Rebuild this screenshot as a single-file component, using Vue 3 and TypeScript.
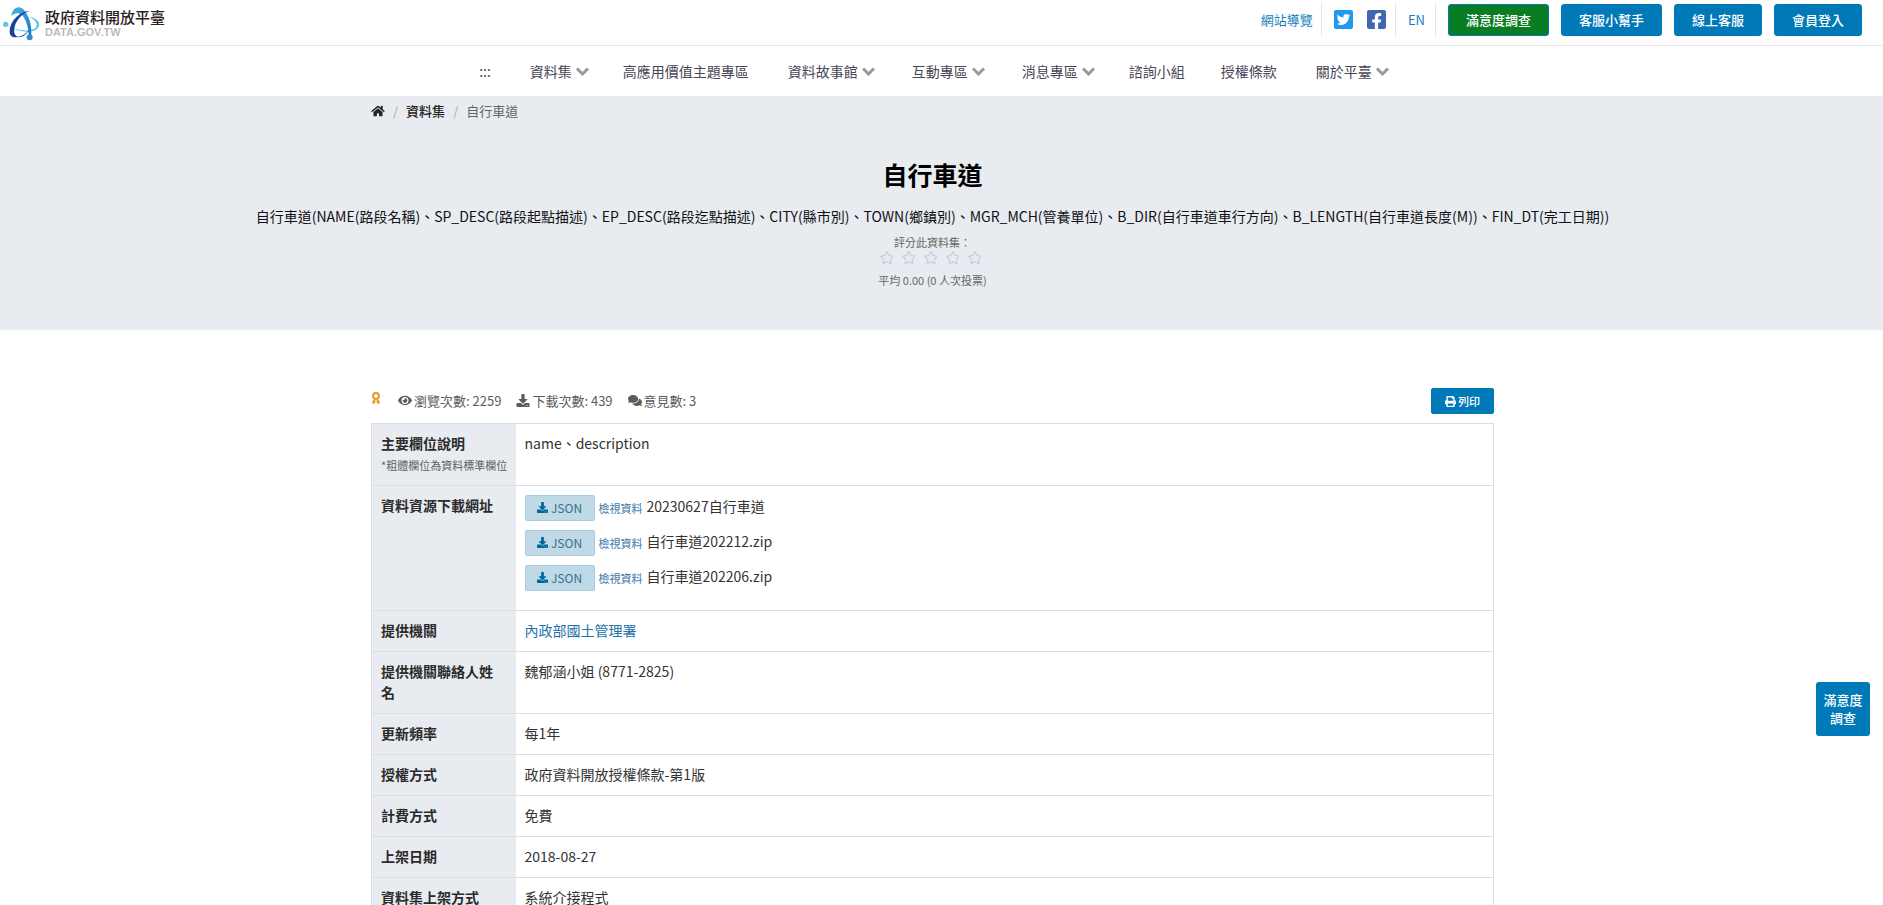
<script setup lang="ts">
interface NavItem { label: string; menu: boolean }
interface Resource { name: string }
interface Row { label: string; value: string }

const nav: NavItem[] = [
  { label: '資料集', menu: true },
  { label: '高應用價值主題專區', menu: false },
  { label: '資料故事館', menu: true },
  { label: '互動專區', menu: true },
  { label: '消息專區', menu: true },
  { label: '諮詢小組', menu: false },
  { label: '授權條款', menu: false },
  { label: '關於平臺', menu: true },
]

const actions: string[] = ['客服小幫手', '線上客服', '會員登入']

const resources: Resource[] = [
  { name: '20230627自行車道' },
  { name: '自行車道202212.zip' },
  { name: '自行車道202206.zip' },
]

const rows: Row[] = [
  { label: '提供機關聯絡人姓名', value: '魏郁涵小姐 (8771-2825)' },
  { label: '更新頻率', value: '每1年' },
  { label: '授權方式', value: '政府資料開放授權條款-第1版' },
  { label: '計費方式', value: '免費' },
  { label: '上架日期', value: '2018-08-27' },
  { label: '資料集上架方式', value: '系統介接程式' },
]

const icons = {
  download: 'M216 0h80c13.3 0 24 10.7 24 24v168h87.7c17.8 0 26.7 21.5 14.1 34.1L269.7 378.3c-7.5 7.5-19.8 7.5-27.3 0L90.1 226.1c-12.6-12.6-3.7-34.1 14.1-34.1H192V24c0-13.3 10.7-24 24-24zm296 376v112c0 13.3-10.7 24-24 24H24c-13.3 0-24-10.7-24-24V376c0-13.3 10.7-24 24-24h146.7l49 49c20.1 20.1 52.5 20.1 72.6 0l49-49H488c13.3 0 24 10.7 24 24zm-124 88c0-11-9-20-20-20s-20 9-20 20 9 20 20 20 20-9 20-20zm64 0c0-11-9-20-20-20s-20 9-20 20 9 20 20 20 20-9 20-20z',
  eye: 'M572.52 241.4C518.29 135.59 410.93 64 288 64S57.68 135.64 3.48 241.41a32.35 32.35 0 0 0 0 29.19C57.71 376.41 165.07 448 288 448s230.32-71.64 284.52-177.41a32.35 32.35 0 0 0 0-29.19zM288 400a144 144 0 1 1 144-144 143.93 143.93 0 0 1-144 144zm0-240a95.31 95.31 0 0 0-25.31 3.79 47.85 47.85 0 0 1-66.9 66.9A95.78 95.78 0 1 0 288 160z',
  comments: 'M416 192c0-88.4-93.1-160-208-160S0 103.6 0 192c0 34.3 14.1 65.9 38 92-13.4 30.2-35.5 54.2-35.8 54.5-2.2 2.3-2.8 5.7-1.5 8.7S4.8 352 8 352c36.6 0 66.9-12.3 88.7-25 32.2 15.7 70.3 25 111.3 25 114.9 0 208-71.6 208-160zm122 220c23.9-26 38-57.7 38-92 0-66.9-53.5-124.2-129.3-148.1.9 6.6 1.3 13.3 1.3 20.1 0 105.9-107.7 192-240 192-10.8 0-21.3-.8-31.7-1.9C207.8 439.6 281.8 480 368 480c41 0 79.1-9.2 111.3-25 21.8 12.7 52.1 25 88.7 25 3.2 0 6.1-1.9 7.3-4.8 1.3-2.9.7-6.3-1.5-8.7-.3-.3-22.4-24.2-35.8-54.5z',
  home: 'M280.37 148.26L96 300.11V464a16 16 0 0 0 16 16l112.06-.29a16 16 0 0 0 15.92-16V368a16 16 0 0 1 16-16h64a16 16 0 0 1 16 16v95.64a16 16 0 0 0 16 16.05L464 480a16 16 0 0 0 16-16V300L295.67 148.26a12.19 12.19 0 0 0-15.3 0zM571.6 251.47L488 182.56V44.05a12 12 0 0 0-12-12h-56a12 12 0 0 0-12 12v72.61L318.47 43a48 48 0 0 0-61 0L4.34 251.47a12 12 0 0 0-1.6 16.9l25.5 31A12 12 0 0 0 45.15 301l235.22-193.74a12.19 12.19 0 0 1 15.3 0L530.9 301a12 12 0 0 0 16.9-1.6l25.5-31a12 12 0 0 0-1.7-16.93z',
  print: 'M448 192V77.25c0-8.49-3.37-16.62-9.37-22.63L393.37 9.37c-6-6-14.14-9.37-22.63-9.37H96C78.33 0 64 14.33 64 32v160c-35.35 0-64 28.65-64 64v112c0 8.84 7.16 16 16 16h48v96c0 17.67 14.33 32 32 32h320c17.67 0 32-14.33 32-32v-96h48c8.84 0 16-7.16 16-16V256c0-35.35-28.65-64-64-64zm-64 256H128v-96h256v96zm0-224H128V64h192v48c0 8.84 7.16 16 16 16h48v96zm48 72c-13.25 0-24-10.75-24-24 0-13.26 10.75-24 24-24s24 10.74 24 24c0 13.25-10.75 24-24 24z',
  twitter: 'M400 32H48C21.5 32 0 53.5 0 80v352c0 26.5 21.5 48 48 48h352c26.5 0 48-21.5 48-48V80c0-26.5-21.5-48-48-48zm-48.9 158.8c.2 2.8.2 5.7.2 8.5 0 86.7-66 186.6-186.6 186.6-37.2 0-71.7-10.8-100.7-29.4 5.3.6 10.4.8 15.8.8 30.7 0 58.9-10.4 81.4-28-28.8-.6-53-19.5-61.3-45.5 10.1 1.5 19.2 1.5 29.6-1.2-30-6.1-52.5-32.5-52.5-64.4v-.8c8.7 4.9 18.9 7.9 29.6 8.3a65.447 65.447 0 0 1-29.2-54.6c0-12.2 3.2-23.4 8.9-33.1 32.3 39.8 80.8 65.8 135.2 68.6-9.3-44.5 24-80.6 64-80.6 18.9 0 35.9 7.9 47.9 20.7 14.8-2.8 29-8.3 41.6-15.8-4.9 15.2-15.2 28-28.8 36.1 13.2-1.4 26-5.1 37.8-10.2-8.9 13.1-20.1 24.7-32.9 34z',
  facebook: 'M400 32H48A48 48 0 0 0 0 80v352a48 48 0 0 0 48 48h137.25V327.69h-63V256h63v-54.64c0-62.15 37-96.48 93.67-96.48 27.14 0 55.52 4.84 55.52 4.84v61h-31.27c-30.81 0-40.42 19.12-40.42 38.73V256h68.78l-11 71.69h-57.78V480H400a48 48 0 0 0 48-48V80a48 48 0 0 0-48-48z',
  star: 'M528.1 171.5L382 150.2 316.7 17.8c-11.7-23.6-45.6-23.9-57.4 0L194 150.2 47.9 171.5c-26.2 3.8-36.7 36.1-17.7 54.6l105.7 103-25 145.5c-4.5 26.3 23.2 46 46.4 33.7L288 439.6l130.7 68.7c23.2 12.2 50.9-7.4 46.4-33.7l-25-145.5 105.7-103c19-18.5 8.5-50.8-17.7-54.6zM388.6 312.3l23.7 138.4L288 385.4l-124.3 65.3 23.7-138.4-100.6-98 139-20.2 62.2-126 62.2 126 139 20.2-100.6 98z',
}
</script>

<template>
  <div class="page">
    <header class="topbar">
      <a class="brand" href="#">
        <svg class="brand-mark" viewBox="6 20 114 108" aria-hidden="true">
          <defs>
            <linearGradient id="arc" x1="0" y1="0" x2="1" y2="1">
              <stop offset="0" stop-color="#49b3e4" />
              <stop offset="1" stop-color="#2277c4" />
            </linearGradient>
          </defs>
          <path class="cyan" d="M18 78C45 93 92 100 107 85C116 74 104 60 88 52C104 54 121 66 117 80C108 106 55 100 18 78z" />
          <path class="sky" d="M34 50C37 31 47 23 58 24C75 26 97 62 94 108L86 108C86 84 75 53 63 45C52 38 42 42 34 50z" fill="url(#arc)" />
          <path class="navy" d="M89 34C62 44 45 67 43 89C41 102 45 109 54 112C38 117 28 110 29 94C31 63 59 36 89 34z" />
          <path class="navy" d="M53 112C67 111 79 102 89 88C81 105 68 114 53 114z" />
          <circle class="cyan" cx="17" cy="75" r="8" />
          <circle cx="89" cy="114" r="9" fill="#2f8dcf" />
        </svg>
        <span class="brand-text">
          <span class="brand-name">政府資料開放平臺</span>
          <span class="brand-domain">DATA.GOV.TW</span>
        </span>
      </a>
      <div class="tools">
        <a class="tool sitemap" href="#">網站導覽</a>
        <span class="tool social">
          <a href="#" aria-label="Twitter"><svg class="social-icon twitter" viewBox="0 32 448 448"><path :d="icons.twitter" /></svg></a>
          <a href="#" aria-label="Facebook"><svg class="social-icon facebook" viewBox="0 32 448 448"><path :d="icons.facebook" /></svg></a>
        </span>
        <a class="tool language" href="#">EN</a>
        <div class="actions">
          <button class="action survey" type="button">滿意度調查</button>
          <button v-for="a in actions" :key="a" class="action" type="button">{{ a }}</button>
        </div>
      </div>
    </header>

    <nav class="nav">
      <a class="nav-link" href="#">:::</a>
      <a v-for="n in nav" :key="n.label" class="nav-link" :class="{ menu: n.menu }" href="#">
        {{ n.label }}
        <svg v-if="n.menu" class="chevron" viewBox="0 0 13 9" aria-hidden="true"><path d="M1 1.5L6.500 7L12 1.5" /></svg>
      </a>
    </nav>

    <section class="hero">
      <ol class="crumbs">
        <li><a href="#" aria-label="首頁"><svg class="home" viewBox="0 0 576 512"><path :d="icons.home" /></svg></a></li>
        <li><a class="strong" href="#">資料集</a></li>
        <li>自行車道</li>
      </ol>
      <h1>自行車道</h1>
      <p class="summary">自行車道(NAME(路段名稱)、SP_DESC(路段起點描述)、EP_DESC(路段迄點描述)、CITY(縣市別)、TOWN(鄉鎮別)、MGR_MCH(管養單位)、B_DIR(自行車道車行方向)、B_LENGTH(自行車道長度(M))、FIN_DT(完工日期))</p>
      <p class="rate-label">評分此資料集：</p>
      <div class="stars">
        <button v-for="s in 5" :key="s" type="button" class="star" :aria-label="`${s} 分`">
          <svg viewBox="20 0 536 512"><path :d="icons.star" /></svg>
        </button>
      </div>
      <p class="rate-label">平均 0.00 (0 人次投票)</p>
    </section>

    <main class="main">
      <div class="meta">
        <svg class="award" viewBox="0 0 10 13" aria-hidden="true">
          <circle cx="5" cy="4" r="2.900" />
          <path d="M2.400 7.400L4.700 8.600L3.600 12.600L2.600 11.200L0.700 11.200zM7.600 7.400L5.300 8.600L6.400 12.600L7.400 11.200L9.300 11.200z" />
        </svg>
        <span class="stat"><svg viewBox="0 0 576 512"><path :d="icons.eye" /></svg>瀏覽次數: 2259</span>
        <span class="stat"><svg viewBox="0 0 512 512"><path :d="icons.download" /></svg>下載次數: 439</span>
        <span class="stat"><svg viewBox="0 0 576 512"><path :d="icons.comments" /></svg>意見數: 3</span>
        <button class="print" type="button"><svg viewBox="0 0 512 512"><path :d="icons.print" /></svg>列印</button>
      </div>

      <table class="details">
        <tbody>
          <tr>
            <th scope="row">主要欄位說明<small>*粗體欄位為資料標準欄位</small></th>
            <td>name、description</td>
          </tr>
          <tr>
            <th scope="row">資料資源下載網址</th>
            <td>
              <ul class="resources">
                <li v-for="r in resources" :key="r.name">
                  <button class="format" type="button"><svg viewBox="0 0 512 512"><path :d="icons.download" /></svg>JSON</button>
                  <a class="view" href="#">檢視資料</a>
                  <span class="file">{{ r.name }}</span>
                </li>
              </ul>
            </td>
          </tr>
          <tr>
            <th scope="row">提供機關</th>
            <td><a class="agency" href="#">內政部國土管理署</a></td>
          </tr>
          <tr v-for="r in rows" :key="r.label">
            <th scope="row">{{ r.label }}</th>
            <td>{{ r.value }}</td>
          </tr>
        </tbody>
      </table>
    </main>

    <button class="float-survey" type="button">滿意度<br />調查</button>
  </div>
</template>

<style>
body {
  margin: 0;
  background: #fff;
}
</style>

<style scoped>
.page {
  font-family: "Noto Sans CJK TC", "Noto Sans", sans-serif;
  font-size: 14px;
  line-height: 21px;
  color: #333;
}
.page * {
  box-sizing: border-box;
}
a {
  color: inherit;
  text-decoration: none;
}
button {
  font-family: inherit;
  cursor: pointer;
}
svg {
  display: block;
  fill: currentColor;
}
.topbar {
  display: flex;
  justify-content: space-between;
  align-items: flex-start;
  height: 46px;
  padding: 0 21px 0 2px;
  border-bottom: 1px solid #e6e6e8;
}
.brand {
  display: flex;
  align-items: center;
  gap: 5px;
  padding-top: 6px;
}
.brand-mark {
  width: 38px;
  height: 36px;
}
.cyan {
  fill: #5fc2e8;
}
.navy {
  fill: #19409a;
}
.brand-text {
  display: flex;
  flex-direction: column;
  padding-bottom: 4px;
}
.brand-name {
  font-size: 15px;
  line-height: 19px;
  font-weight: 500;
  color: #2a2020;
}
.brand-domain {
  font-family: "Liberation Sans", Arial, sans-serif;
  font-size: 11px;
  line-height: 12px;
  font-weight: 700;
  color: #bcbcbc;
}
.tools {
  display: flex;
  padding-top: 3px;
}
.tool {
  display: flex;
  align-items: center;
  height: 33px;
  padding: 0 10px;
  border-right: 1px solid #e6e6e8;
  font-size: 13px;
  color: #1580bb;
}
.sitemap {
  padding-right: 8px;
}
.social {
  gap: 14px;
  padding: 0 9px 0 12px;
}
.language {
  padding-left: 12px;
}
.social-icon {
  width: 19px;
  height: 19px;
}
.twitter {
  fill: #1d9bf0;
}
.facebook {
  fill: #4267b2;
}
.actions {
  display: flex;
  gap: 12px;
  padding: 1px 0 0 12px;
}
.action {
  height: 32px;
  padding: 0 17px 2px;
  border: 1px solid #0079b8;
  border-radius: 3px;
  background: #0079b8;
  color: #fff;
  font-size: 13px;
  font-weight: 500;
}
.survey {
  background: #0a7d24;
}
.nav {
  display: flex;
  justify-content: center;
  align-items: center;
  height: 50px;
  padding-right: 15px;
  color: #4a4657;
}
.nav-link {
  display: flex;
  align-items: center;
  gap: 4px;
  padding: 0 19px 0 17px;
}
.menu {
  padding: 0 17px 0 20px;
}
.chevron {
  width: 13px;
  height: 9px;
  fill: none;
  stroke: #999;
  stroke-width: 3;
}
.hero {
  height: 234px;
  padding: 4px 18px 0 0;
  background: #e8ecf1;
  text-align: center;
}
.crumbs {
  display: flex;
  align-items: center;
  width: 100%;
  max-width: 1123px;
  margin: 0 auto;
  padding: 0;
  list-style: none;
  font-size: 13px;
  color: #666;
}
.crumbs li {
  display: flex;
  align-items: center;
}
.crumbs li + li::before {
  content: "/";
  padding: 0 8px;
  color: #aaa;
}
.crumbs a {
  color: #222;
}
.strong {
  font-weight: 500;
}
.home {
  width: 14px;
  height: 12px;
}
h1 {
  margin: 35px 0 0;
  font-size: 25px;
  line-height: 36px;
  font-weight: 700;
  color: #000;
}
.summary {
  margin: 14px 0 0;
  color: #111;
}
.rate-label {
  margin: 7px 0 0;
  font-size: 11px;
  line-height: 16px;
  color: #666;
}
.stars {
  display: flex;
  justify-content: center;
  gap: 8px;
  padding: 1px 4px 0 0;
}
.star {
  width: 14px;
  height: 14px;
  padding: 0;
  border: 0;
  background: none;
  color: #c3d0e0;
}
.main {
  max-width: 1141px;
  margin: 0 auto;
  padding: 58px 18px 0 0;
}
.meta {
  display: flex;
  align-items: center;
  height: 26px;
  margin-bottom: 9px;
  font-size: 13px;
  color: #5c5c5c;
}
.award {
  width: 10px;
  height: 13px;
  margin: 0 17px 5px 0;
  fill: #e69a28;
}
.award circle {
  fill: none;
  stroke: #e69a28;
  stroke-width: 2;
}
.stat {
  display: flex;
  align-items: center;
  gap: 2px;
  margin: 0 15px 2px 0;
}
.stat svg {
  width: 14px;
  height: 13px;
}
.print {
  display: flex;
  align-items: center;
  gap: 2px;
  height: 26px;
  margin-left: auto;
  padding: 0 13px;
  border: 1px solid #0079b8;
  border-radius: 2px;
  background: #0079b8;
  color: #fff;
  font-size: 11px;
  font-weight: 500;
}
.print svg,
.format svg {
  width: 11px;
  height: 11px;
}
.details {
  width: 100%;
  border-collapse: collapse;
  table-layout: fixed;
  border: 1px solid #dadde5;
}
th,
td {
  padding: 9px 10px 10px 9px;
  border-top: 1px solid #dadde5;
  text-align: left;
  vertical-align: top;
}
th {
  width: 144px;
  background: #e8ecf1;
  color: #2b2b2b;
  font-weight: 700;
}
small {
  display: block;
  padding-top: 2px;
  font-size: 11px;
  line-height: 19px;
  font-weight: 400;
  color: #5c5c5c;
  white-space: nowrap;
}
.resources {
  margin: 0;
  padding: 0;
  list-style: none;
}
.resources li {
  display: flex;
  align-items: center;
  gap: 4px;
  height: 26px;
  margin-bottom: 9px;
}
.format {
  display: flex;
  align-items: center;
  justify-content: center;
  gap: 3px;
  width: 70px;
  height: 26px;
  padding: 0 0 2px;
  border: 1px solid #a9cbe4;
  border-radius: 2px;
  background: #c0d9e7;
  color: #34708f;
  font-size: 12px;
}
.format svg {
  fill: #00669c;
}
.view {
  font-size: 11px;
  color: #3a76ab;
}
.file {
  padding-bottom: 3px;
}
.agency {
  color: #2372ab;
}
.float-survey {
  position: fixed;
  right: 13px;
  bottom: 169px;
  width: 54px;
  height: 54px;
  padding: 0;
  border: 0;
  border-radius: 3px;
  background: #0079b8;
  color: #fff;
  font-size: 13px;
  line-height: 18px;
  font-weight: 500;
}
</style>
